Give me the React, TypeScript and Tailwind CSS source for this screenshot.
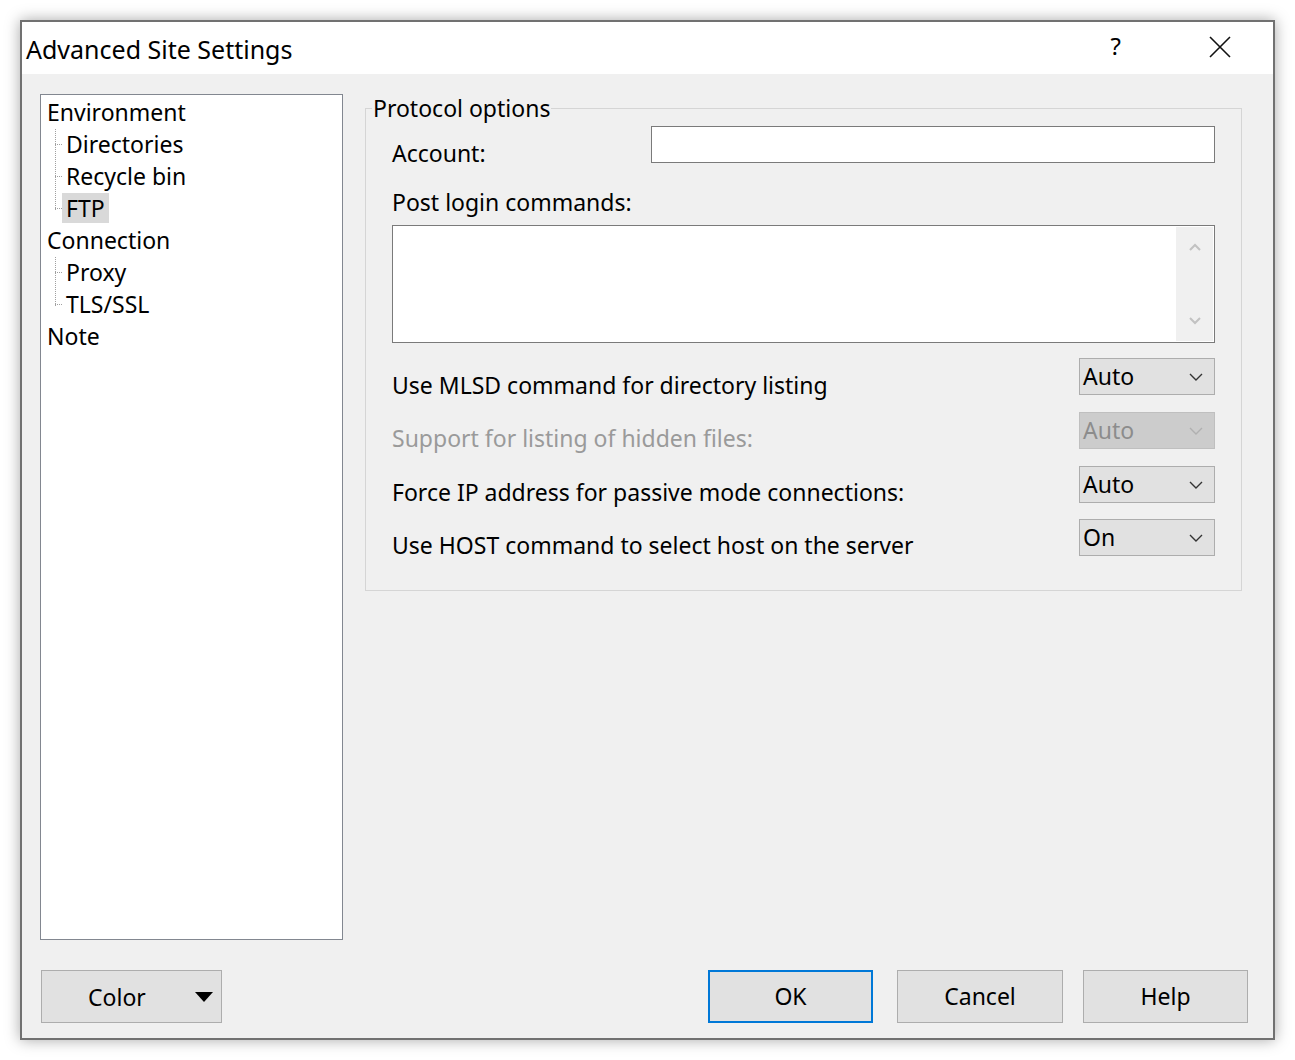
import React from 'react';

const font = { fontFamily: '"Noto Sans", "Open Sans", sans-serif' };

function Chevron({ color = '#333' }: { color?: string }) {
  return (
    <svg width="14" height="8" viewBox="0 0 14 8" fill="none">
      <path d="M1 1l6 6 6-6" stroke={color} strokeWidth="1.4" />
    </svg>
  );
}

function Combo({ value, disabled }: { value: string; disabled?: boolean }) {
  return (
    <div
      className={`w-[136px] h-[37px] border flex items-center justify-between pl-[3px] pr-[11px] shrink-0 ${
        disabled ? 'bg-[#cccccc] border-[#bfbfbf] text-[#8c8c8c]' : 'bg-[#e1e1e1] border-[#adadad] text-black'
      }`}
    >
      <span className="leading-[32px] -mt-[2px]">{value}</span>
      <Chevron color={disabled ? '#b0b0b0' : '#333'} />
    </div>
  );
}

function OptionRow({ label, value, disabled, mt, off }: { label: string; value: string; disabled?: boolean; mt: string; off: string }) {
  return (
    <div className={`flex justify-between items-start h-[37px] pl-[26px] pr-[26px] ${mt}`}>
      <span className={`leading-[32px] ${off} ${disabled ? 'text-[#9a9a9a]' : ''}`}>{label}</span>
      <Combo value={value} disabled={disabled} />
    </div>
  );
}

function TreeItem({ label, child, selected }: { label: string; child?: boolean; selected?: boolean }) {
  return (
    <div className={`h-[32px] flex items-center ${child ? 'pl-[14px]' : 'pl-[6px]'}`}>
      {child && <span className="w-[7px] border-t border-dotted border-[#a0a0a0]" />}
      <span className={`leading-[30px] ${child ? 'px-[4px]' : ''} ${selected ? 'bg-[#d9d9d9]' : ''}`}>{label}</span>
    </div>
  );
}

function Button({ children, primary, w }: { children: React.ReactNode; primary?: boolean; w: string }) {
  return (
    <div
      className={`${w} h-[53px] bg-[#e1e1e1] flex items-center justify-center ${
        primary ? 'border-2 border-[#0078d7]' : 'border border-[#adadad]'
      }`}
    >
      {children}
    </div>
  );
}

export default function App() {
  return (
    <div className="w-[1295px] h-[1060px] bg-white pt-[20px] pl-[20px] text-[23px] text-black" style={font}>
      <div className="w-[1255px] h-[1020px] border-2 border-[#717171] flex flex-col shadow-[0_0_14px_rgba(0,0,0,0.35)]">
        {/* Title bar */}
        <div className="h-[52px] bg-white flex items-center shrink-0">
          <span className="pl-[4px] leading-[32px] mt-[2px] text-[25px]">Advanced Site Settings</span>
          <div className="flex-1" />
          <span className="leading-[32px] mr-[88px] -mt-[4px] text-[24px]">?</span>
          <svg width="22" height="22" viewBox="0 0 22 22" className="mr-[42px] -mt-[3px]">
            <path d="M1 1l20 20M21 1L1 21" stroke="#111" strokeWidth="1.6" />
          </svg>
        </div>

        {/* Client */}
        <div className="flex-1 bg-[#f0f0f0] flex flex-col">
          <div className="flex pt-[20px]">
            {/* Tree */}
            <div className="ml-[18px] w-[303px] h-[846px] bg-white border border-[#828790] pt-[1px] relative">
              <div className="absolute left-[14px] top-[34px] h-[81px] border-l border-dotted border-[#a0a0a0]" />
              <div className="absolute left-[14px] top-[162px] h-[49px] border-l border-dotted border-[#a0a0a0]" />
              <TreeItem label="Environment" />
              <TreeItem label="Directories" child />
              <TreeItem label="Recycle bin" child />
              <TreeItem label="FTP" child selected />
              <TreeItem label="Connection" />
              <TreeItem label="Proxy" child />
              <TreeItem label="TLS/SSL" child />
              <TreeItem label="Note" />
            </div>

            {/* Protocol options */}
            <fieldset className="ml-[22px] w-[877px] h-[497px] border border-[#d5d5d5]">
              <legend className="ml-[6px] px-[1px] leading-[28px]">Protocol options</legend>
              <div className="flex justify-between items-start h-[37px] pl-[26px] pr-[26px] mt-[4px]">
                <span className="leading-[32px] mt-[11px]">Account:</span>
                <div className="w-[564px] h-[37px] bg-white border border-[#7a7a7a]" />
              </div>
              <div className="pl-[26px] mt-[23px] leading-[32px]">Post login commands:</div>
              <div className="ml-[26px] mt-[7px] w-[823px] h-[118px] bg-white border border-[#7a7a7a] flex justify-end p-[1px]">
                <div className="w-[37px] h-full bg-[#f0f0f0] flex flex-col items-center justify-between py-[16px]">
                  <svg width="12" height="8" viewBox="0 0 12 8">
                    <path d="M1 7l5-5 5 5" stroke="#c2c2c2" strokeWidth="2" fill="none" />
                  </svg>
                  <svg width="12" height="8" viewBox="0 0 12 8">
                    <path d="M1 1l5 5 5-5" stroke="#c2c2c2" strokeWidth="2" fill="none" />
                  </svg>
                </div>
              </div>
              <OptionRow label="Use MLSD command for directory listing" value="Auto" mt="mt-[15px]" off="mt-[11px]" />
              <OptionRow label="Support for listing of hidden files:" value="Auto" disabled mt="mt-[17px]" off="mt-[10px]" />
              <OptionRow label="Force IP address for passive mode connections:" value="Auto" mt="mt-[17px]" off="mt-[10px]" />
              <OptionRow label="Use HOST command to select host on the server" value="On" mt="mt-[16px]" off="mt-[10px]" />
            </fieldset>
          </div>

          {/* Buttons */}
          <div className="flex mt-[30px] pl-[19px] pr-[25px]">
            <div className="w-[181px] h-[53px] bg-[#e1e1e1] border border-[#adadad] flex items-center">
              <span className="ml-[46px] leading-[32px]">Color</span>
              <svg width="18" height="10" viewBox="0 0 18 10" className="ml-[49px]">
                <path d="M0 0h18L9 10z" fill="#000" />
              </svg>
            </div>
            <div className="flex-1" />
            <Button primary w="w-[165px]">OK</Button>
            <div className="w-[24px]" />
            <Button w="w-[166px]">Cancel</Button>
            <div className="w-[20px]" />
            <Button w="w-[165px]">Help</Button>
          </div>
        </div>
      </div>
    </div>
  );
}
